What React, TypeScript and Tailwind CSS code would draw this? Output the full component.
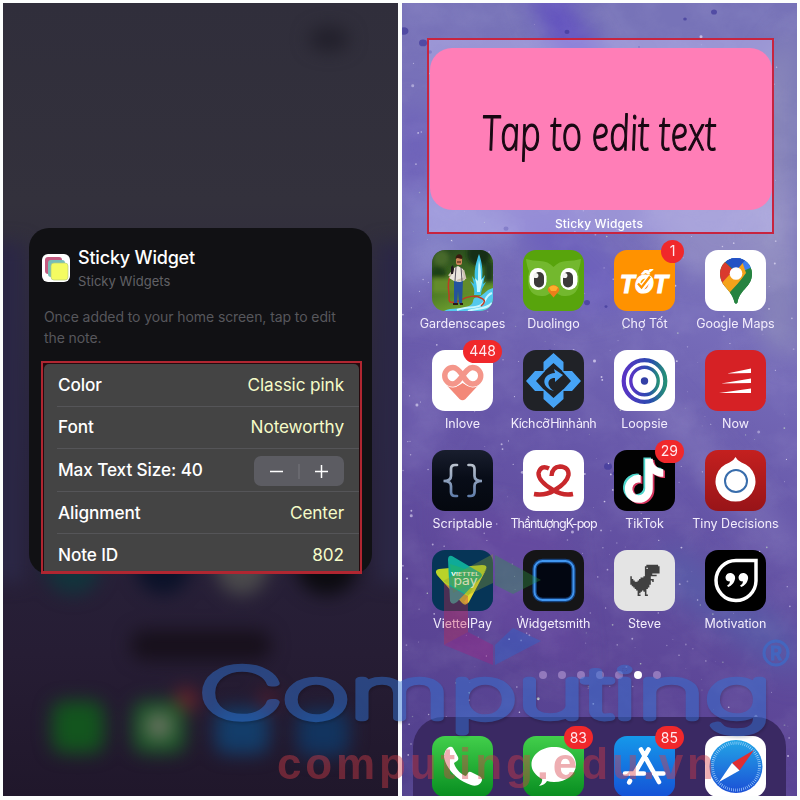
import React from "react";

type App = { name: string; icon: React.ReactNode; badge?: string; tight?: string };

function Tile({ children, bg }: { children?: React.ReactNode; bg: string }) {
  return (
    <svg viewBox="0 0 61 61" className="block h-[61px] w-[61px] overflow-hidden rounded-[13px]">
      <rect width="61" height="61" fill={bg} />
      {children}
    </svg>
  );
}

const Gardenscapes = (
  <Tile bg="url(#garden)">
    <defs>
      <linearGradient id="garden" x1="0" y1="0" x2="0.4" y2="1">
        <stop offset="0" stopColor="#22401c" />
        <stop offset="0.5" stopColor="#3f6b22" />
        <stop offset="1" stopColor="#6fa02e" />
      </linearGradient>
      <filter id="gb"><feGaussianBlur stdDeviation="2.2" /></filter>
    </defs>
    <g filter="url(#gb)">
      <circle cx="9" cy="8" r="8" fill="#47692a" />
      <circle cx="47" cy="4" r="12" fill="#182e17" />
      <circle cx="6" cy="24" r="8" fill="#1f3f17" />
      <rect x="0" y="28" width="45" height="15" fill="#648c2c" />
      <rect x="52" y="12" width="10" height="20" fill="#1a3a1b" />
    </g>
    <path d="M12 61c7-4 18-1 25-5 7-3 1-7 8-9 7-1 8-7 16-9v23z" fill="#54c9ed" />
    <path d="M25 60c10-4 18-1 24-5 6-3 3-9 11-12M36 61c8-3 18-1 24-8" stroke="#c8f6ff" strokeWidth="2" fill="none" />
    <path d="M42 45c1-7-1-9-4-14l4 3-2-8 3 4c-1-8 0-15 4-26 3 8 4 16 3 25l3-4-2 9 3-2c-3 5-5 8-5 13z" fill="#3fc3e8" />
    <path d="M45 42c0-7-1-10-2-14l3 3c0-8 0-15 1-21 2 8 2 14 2 20l2-2-3 14z" fill="#c9fbff" />
    <path d="M18 27c-4 9 0 15-1 22 0 5 6 4 12 1 6-4 15-5 20-2 5 2 4 5 0 8" stroke="#bf3c24" strokeWidth="1.5" fill="none" />
    <path d="M22 30h9l-1 24h-3l-1-13-1 13h-3z" fill="#24539c" />
    <path d="M22 18l4-2 5 3 2 11-5 2-6-1-5-3 3-4z" fill="#ece7df" />
    <path d="M17 26l5-6M31 20l2 8-8 3" stroke="#cfc2b4" strokeWidth="2.4" fill="none" />
    <path d="M24 17l-1 14M29 17l1 14" stroke="#4b4653" strokeWidth="0.9" />
    <rect x="24" y="6" width="6" height="9" rx="2.6" fill="#c98457" />
    <path d="M23.5 9c0-6 7-6 7-1l-1 1-4-1z" fill="#3a1b10" />
    <path d="M25 12h4" stroke="#3a1b10" />
    <path d="M19 17l2-2 1 4-1 5h-2z" fill="#201a1e" />
    <path d="M21 54h5M28 54h3" stroke="#2d1712" strokeWidth="2" />
  </Tile>
);

const Duolingo = (
  <Tile bg="#58a40c">
    <path d="M3 9q7 2 14 2 8 0 13.500 6 5.500-6 13.500-6 7 0 14-2-1 8-3 12 2 10 0 17-4 9-14 8-5 0-10.500-6-5.500 6-10.500 6-10 1-14-8-2-7 0-17-2-4-3-12" fill="#73b82e" />
    <rect x="6.500" y="18" width="17" height="22" rx="8.500" fill="#fff" />
    <rect x="37.500" y="18" width="17" height="22" rx="8.500" fill="#fff" />
    <rect x="11" y="22" width="10" height="15.500" rx="5" fill="#3c3a3a" />
    <rect x="40" y="22" width="10" height="15.500" rx="5" fill="#3c3a3a" />
    <circle cx="12.800" cy="25.500" r="2.600" fill="#f3f3f3" />
    <circle cx="41.800" cy="25.500" r="2.600" fill="#f3f3f3" />
    <path d="M26 37q4.500-4 9 0 2 2 1 4l-5.500 6.500L25 41q-1-2 1-4z" fill="#ec7e1a" />
    <path d="M26 37.500q4.500-4 9 0l-2 3.500h-5z" fill="#ffae2c" />
  </Tile>
);

const ChoTot = (
  <Tile bg="#ff9200">
    <text x="6" y="43" textLength="48" lengthAdjust="spacingAndGlyphs" fill="#fff" stroke="#fff" strokeWidth="1.200" className="font-['Liberation_Sans',sans-serif] text-[25px] font-bold italic">TỐT</text>
    <path d="M23.500 34l4 4 9-11" fill="none" stroke="#fff" strokeWidth="6" />
    <path d="M24 33.500l3.500 4 8.500-11" fill="none" stroke="#ff9200" strokeWidth="2.300" />
  </Tile>
);

const GoogleMaps = (
  <Tile bg="#fff">
    <defs>
      <clipPath id="pin"><path d="M31 8c9 0 16 7 16 15.500 0 14-12 15-14.500 29-.5 1.500-2.500 1.500-3 0C27 39 15 37 15 23.500 15 15 22 8 31 8" /></clipPath>
    </defs>
    <g clipPath="url(#pin)">
      <path d="M14 7h34v47H14z" fill="#268340" />
      <path d="M12 0h40L31 23z" fill="#2452c4" />
      <path d="M25 5h27v10L31 24z" fill="#3d7ef2" />
      <path d="M14 10L20 12l11 11-15 18z" fill="#d93a2e" />
      <path d="M14 36l23-25 4 12-20 27z" fill="#f5a21b" />
      <path d="M50 15L25 42v13h25z" fill="#268340" />
      <path d="M24 7l18 1-11 13-11-9z" fill="#2452c4" />
    </g>
    <circle cx="31" cy="23.500" r="6.300" fill="#fff" />
  </Tile>
);

const Inlove = (
  <Tile bg="#fff">
    <path d="M14.500 35q9 4 16-2 8 6 16 2L33.500 49q-3 2.500-6 0z" fill="#f38878" />
    <path d="M31 26C27 20 24 17.500 21 17.500a8 8 0 0 0 0 16.500C28 34 33 17.500 40.500 17.500a8 8 0 0 1 0 16.500C37 34 34 31 31 26" fill="none" stroke="#fff" strokeWidth="7" />
    <path d="M31 26C27 20 24 17.500 21 17.500a8 8 0 0 0 0 16.500C28 34 33 17.500 40.500 17.500a8 8 0 0 1 0 16.500C37 34 34 31 31 26" fill="none" stroke="#f4968a" strokeWidth="5.400" />
  </Tile>
);

const Resize = (
  <Tile bg="#202227">
    <g fill="#46a3f5">
      <path d="M30.500 3l10 9v10l-10-9-10 9V12z" />
      <path d="M30.500 58l10-9V39l-10 9-10-9v10z" />
      <path d="M3 31l9-10h10l-9 10 9 10H12z" />
      <path d="M58 31l-9-10H39l9 10-9 10h10z" />
      <path d="M31 41c-13-3-13-17 1-18l-1-4 9 6-8 7v-4c-8 0-9 8-1 13" />
    </g>
  </Tile>
);

const Loopsie = (
  <Tile bg="#fff">
    <defs>
      <linearGradient id="loop" x1="0" x2="1"><stop stopColor="#5934c5" /><stop offset=".65" stopColor="#294cae" /><stop offset="1" stopColor="#258f78" /></linearGradient>
    </defs>
    <circle cx="30.500" cy="31" r="20.800" stroke="url(#loop)" strokeWidth="4.200" fill="none" />
    <circle cx="30.500" cy="31" r="13.700" stroke="url(#loop)" strokeWidth="3.400" fill="none" />
    <circle cx="30.500" cy="31" r="3.700" fill="#3340a7" />
  </Tile>
);

const Now = (
  <Tile bg="#d62125">
    <path d="M22 23.500L46 18.500v4.500zM16 33.500L46 28.500v4.500zM14 43l32-4.500V43z" fill="#fff" />
  </Tile>
);

const Scriptable = (
  <Tile bg="url(#scr)">
    <defs>
      <linearGradient id="scr" x2="0" y2="1"><stop stopColor="#191e2e" /><stop offset=".45" stopColor="#080d18" /><stop offset="1" stopColor="#05080f" /></linearGradient>
      <linearGradient id="brace" x2="0" y2="1"><stop stopColor="#b9c1cd" /><stop offset="1" stopColor="#627fab" /></linearGradient>
    </defs>
    <path d="M25 15h-2q-4 0-4 4v7q0 5-7.500 5 7.500 0 7.500 5v6q0 4 4 4h2M36.500 15h2q4 0 4 4v7q0 5 7.500 5-7.500 0-7.500 5v6q0 4-4 4h-2" fill="none" stroke="url(#brace)" strokeWidth="2.700" strokeLinecap="round" />
  </Tile>
);

const Kpop = (
  <Tile bg="#fff">
    <path d="M28.500 26Q29 17 37 16.500 46 17 45.500 25 44 33 31 40.500 22 46 11 44M26 18.500Q18 14.500 15.500 23 15 31 30 40 40 46 50 44" fill="none" stroke="#c8282c" strokeWidth="4.400" />
  </Tile>
);

const note = "M448,209.91a210.06,210.06,0,0,1-122.77-39.25V349.38A162.55,162.55,0,1,1,185,188.31V278.2a74.62,74.62,0,1,0,52.23,71.18V0l88,0a121.18,121.18,0,0,0,1.86,22.17h0A122.18,122.18,0,0,0,381,102.39a121.43,121.43,0,0,0,67,20.14Z";
const TikTok = (
  <Tile bg="#020202">
    <path d={note} fill="#4ed6cc" transform="translate(9 7.500) scale(.086)" />
    <path d={note} fill="#d5345e" transform="translate(12.500 10) scale(.086)" />
    <path d={note} fill="#fff" transform="translate(10.800 8.800) scale(.086)" />
  </Tile>
);

const Tiny = (
  <Tile bg="url(#tiny)">
    <defs><linearGradient id="tiny" x2="0" y2="1"><stop stopColor="#c4201f" /><stop offset="1" stopColor="#981418" /></linearGradient></defs>
    <path d="M30.500 7q2 4 6 5.500a20 20 0 1 1-12 0q4-1.500 6-5.500" fill="#fff" />
    <circle cx="31" cy="31" r="11" fill="none" stroke="#386dac" strokeWidth="2" />
  </Tile>
);

const Viettel = (
  <Tile bg="#063557">
    <path d="M7 19q-5 1-2 6l25 28q4 4 6-1l18-33q2-4-4-4z" fill="#bad329" />
    <path d="M55 18L37 52q-2 3-5 0l13-19z" fill="#e7d92f" />
    <path d="M20 6q-4-1-4 4l2 41q2 5 7 1l24-25q2-3-2-5z" fill="#0faa98" />
    <path d="M18 14l31 10q2 2-2 5L21 43z" fill="#1cae79" />
    <text x="19" y="25.500" textLength="28" lengthAdjust="spacingAndGlyphs" fill="#fff" className="font-['Inter',sans-serif] text-[4.500px] font-bold">VIETTEL</text>
    <text x="21.500" y="34.500" textLength="24" lengthAdjust="spacingAndGlyphs" fill="#fff" className="font-['Inter',sans-serif] text-[12px]">pay</text>
  </Tile>
);

const Widgetsmith = (
  <Tile bg="#151517">
    <rect x="11.500" y="11" width="39" height="39" rx="8" fill="#020611" stroke="#15427d" strokeWidth="4.400" />
    <rect x="11.500" y="11" width="39" height="39" rx="8" fill="none" stroke="#4196f0" strokeWidth="1.900" />
  </Tile>
);

const dinoRows = [
  "...........########.",
  "..........##########",
  "..........#.########",
  "..........##########",
  "..........##########",
  "..........##########",
  "..........#####.....",
  "..........########..",
  "#........#####......",
  "#......#######......",
  "##....##########....",
  "###..#########.#....",
  "##############......",
  "##############......",
  ".############.......",
  "..###########.......",
  "...#########........",
  "....#######.........",
  ".....###.##.........",
  ".....##...#.........",
  ".....#....#.........",
  ".....##...##........",
];
const dinoPath = dinoRows
  .flatMap((row, y) => [...row].map((c, x) => (c === "#" ? `M${x} ${y}h1.05v1.05h-1.05z` : "")))
  .join("");
const Steve = (
  <Tile bg="#e4e4e4">
    <path d={dinoPath} fill="#404040" transform="translate(16.300 14.800) scale(1.460 1.420)" />
  </Tile>
);

const Motivation = (
  <Tile bg="#000">
    <path d="M51 10.500V31A20 20 0 1 1 31 10.500z" fill="none" stroke="#fff" strokeWidth="3.500" />
    <path d="M20.500 27a4.800 4.800 0 1 1 9.600 1.500c-.6 4.500-4 7.500-7 8.500l-1-1.500q3-2 3-4-4.600 0-4.600-4.500M33.500 27a4.800 4.800 0 1 1 9.600 1.500c-.6 4.500-4 7.500-7 8.500l-1-1.500q3-2 3-4-4.600 0-4.600-4.500" fill="#fff" />
  </Tile>
);

const Phone = (
  <Tile bg="url(#call)">
    <defs><linearGradient id="call" x2="0" y2="1"><stop stopColor="#42cf4b" /><stop offset="1" stopColor="#078d20" /></linearGradient></defs>
    <path d="M17 11q-5 3-5 10c2 12 14 24 27 28 6 2 10-1 11-5 0-2-1-3-3-4l-8-4q-2-1-3 1l-2 3c-5-1-11-8-12-13l3-2q2-1 1-4l-5-9q-1-2-4-1" fill="#fff" />
  </Tile>
);
const Messages = (
  <Tile bg="url(#call)">
    <path d="M31 11c13 0 22 8 22 17.500S44 46 31 46q-4 0-7-1-2 4-8 5 4-4 3-7C12 39 8.500 34 8.500 28.500 8.500 19 18 11 31 11" fill="#fff" />
  </Tile>
);
const AppStore = (
  <Tile bg="url(#store)">
    <defs><linearGradient id="store" x2="0" y2="1"><stop stopColor="#1598ea" /><stop offset="1" stopColor="#1452d6" /></linearGradient></defs>
    <path d="M34.500 13.500L20.500 37.500M27 13.500l18 32.500M11 37.500h19M40 37.500h9.500M16 45l-.8 1.400" stroke="#fff" strokeWidth="4.600" strokeLinecap="round" />
  </Tile>
);
const Safari = (
  <Tile bg="#fff">
    <defs><linearGradient id="saf" x2="0" y2="1"><stop stopColor="#23a5e6" /><stop offset="1" stopColor="#1b50d6" /></linearGradient></defs>
    <circle cx="31" cy="30.500" r="26.500" fill="url(#saf)" />
    <circle cx="31" cy="30.500" r="23.500" fill="none" stroke="#b5dcff" strokeWidth="3" strokeDasharray="0.600 1.450" />
    <path d="M49 14L34.500 34.500 27 27z" fill="#df2e32" />
    <path d="M14 46L27 27l7.500 7.500z" fill="#fff" />
  </Tile>
);

const apps: App[] = [
  { name: "Gardenscapes", icon: Gardenscapes },
  { name: "Duolingo", icon: Duolingo },
  { name: "Chợ Tốt", icon: ChoTot, badge: "1" },
  { name: "Google Maps", icon: GoogleMaps },
  { name: "Inlove", icon: Inlove, badge: "448" },
  { name: "Kích cỡ Hình ảnh", icon: Resize, tight: "tracking-[-0.55px] [word-spacing:-2px]" },
  { name: "Loopsie", icon: Loopsie },
  { name: "Now", icon: Now },
  { name: "Scriptable", icon: Scriptable },
  { name: "Thần tượng K-pop", icon: Kpop, tight: "tracking-[-0.95px] [word-spacing:-2.5px]" },
  { name: "TikTok", icon: TikTok, badge: "29" },
  { name: "Tiny Decisions", icon: Tiny },
  { name: "ViettelPay", icon: Viettel },
  { name: "Widgetsmith", icon: Widgetsmith },
  { name: "Steve", icon: Steve },
  { name: "Motivation", icon: Motivation },
];
const dock: App[] = [
  { name: "Phone", icon: Phone },
  { name: "Messages", icon: Messages, badge: "83" },
  { name: "App Store", icon: AppStore, badge: "85" },
  { name: "Safari", icon: Safari },
];

function Badge({ text }: { text: string }) {
  return (
    <span className="absolute -top-[10px] -right-[9px] flex h-[23px] min-w-[23px] items-center justify-center rounded-full bg-[#f0282b] px-[6px] text-[14px] leading-none text-[#ffe9ee]">
      {text}
    </span>
  );
}

function Wallpaper() {
  let seed = 41;
  const rnd = () => (seed = (seed * 16807) % 2147483647) / 2147483647;
  const specks = Array.from({ length: 420 }, () => {
    const big = rnd();
    return { x: rnd() * 395, y: Math.pow(rnd(), 0.7) * 794, r: big > 0.94 ? 1.5 : 0.35 + big * 0.7, o: 0.3 + rnd() * 0.5 };
  });
  const dark = [[2, 28, 4.5], [21, 40, 4], [28, 49, 2], [165, 29, 2.5], [283, 16, 1.8], [312, 9, 3], [104, 226, 2.5], [185, 300, 3], [204, 304, 1.5], [206, 464, 4], [213, 471, 2.5], [148, 348, 1.5], [237, 44, 1]];
  return (
    <svg viewBox="0 0 395 794" preserveAspectRatio="none" className="absolute inset-0 h-full w-full">
      <defs>
        <linearGradient id="wall" x1="0.2" y1="0" x2="0" y2="1">
          <stop offset="0" stopColor="#7773b8" />
          <stop offset=".28" stopColor="#776dba" />
          <stop offset=".5" stopColor="#6656a8" />
          <stop offset=".75" stopColor="#5c4596" />
          <stop offset="1" stopColor="#50408c" />
        </linearGradient>
        <filter id="soft" x="-30%" y="-30%" width="160%" height="160%" colorInterpolationFilters="sRGB"><feGaussianBlur stdDeviation="13" /></filter>
        <filter id="grain" x="0" y="0" width="100%" height="100%">
          <feTurbulence type="fractalNoise" baseFrequency="0.025 0.03" numOctaves="5" seed="5" />
          <feColorMatrix values="0 0 0 0 0.8 0 0 0 0 0.78 0 0 0 0 0.96 0.9 0 0 0 -0.34" />
        </filter>
      </defs>
      <rect width="395" height="794" fill="url(#wall)" />
      <g filter="url(#soft)">
        <path d="M125 -10l35 0 50 80-40 10z" fill="#6150c0" />
        <path d="M395 20L340 90l20 250 35 20z" fill="#8e8cba" opacity=".75" />
        <path d="M0 100l30 20-10 110H0z" fill="#6a5cba" opacity=".8" />
        <path d="M0 190l60-5 60 45-120 60z" fill="#8583c8" opacity=".8" />
        <path d="M100 200l60 5 90 90-80 20z" fill="#6a5cbc" opacity=".7" />
        <path d="M230 195l165-20v90l-100 10z" fill="#9a96c8" opacity=".7" />
        <path d="M0 360l60 20-40 90-20 10z" fill="#7667b5" opacity=".6" />
        <path d="M250 380L395 540v30L235 400z" fill="#8b80c2" opacity=".6" />
        <path d="M40 500l120 20 20 150-120-60z" fill="#684aa0" opacity=".6" />
        <path d="M270 540l125 90v50L250 580z" fill="#5563ac" opacity=".6" />
      </g>
      <rect width="395" height="794" filter="url(#grain)" opacity=".17" />
      {dark.map(([x, y, r], i) => <ellipse key={i} cx={x} cy={y} rx={r} ry={r * 0.85} fill="#40399a" opacity=".7" />)}
      {specks.map((s, i) => <circle key={i} cx={s.x} cy={s.y} r={s.r} fill={i % 6 === 0 ? "#c5ddc5" : "#e4def6"} opacity={s.o} />)}
    </svg>
  );
}

function DimBackdrop() {
  return (
    <svg viewBox="0 0 395 794" preserveAspectRatio="none" className="absolute inset-0 h-full w-full">
      <defs>
        <linearGradient id="dim" x2="0" y2="1">
          <stop stopColor="#302e3b" />
          <stop offset=".25" stopColor="#33313c" />
          <stop offset=".55" stopColor="#29243d" />
          <stop offset=".82" stopColor="#261d34" />
          <stop offset="1" stopColor="#20172b" />
        </linearGradient>
        <filter id="haze" filterUnits="userSpaceOnUse" x="-60" y="-60" width="520" height="920" colorInterpolationFilters="sRGB"><feGaussianBlur stdDeviation="9" /></filter>
      </defs>
      <rect width="395" height="794" fill="url(#dim)" />
      <g filter="url(#haze)">
        <path d="M-20 240h42v340h-42zM374 240h41v340h-41z" fill="#2b2745" />
        <ellipse cx="326" cy="36" rx="20" ry="12" fill="#211f2a" />
        <ellipse cx="70" cy="565" rx="27" ry="27" fill="#12343c" />
        <ellipse cx="160" cy="565" rx="27" ry="27" fill="#0b1229" />
        <ellipse cx="239" cy="565" rx="26" ry="28" fill="#4b4a4c" />
        <ellipse cx="324" cy="565" rx="30" ry="28" fill="#0c0b10" />
        <rect x="128" y="628" width="140" height="30" rx="13" fill="#17101b" />
        <circle cx="183" cy="698" r="12" fill="#6b212a" />
        <circle cx="265" cy="697" r="10" fill="#4d1c2c" />
        <rect x="49" y="699" width="52" height="52" rx="12" fill="#13551e" />
        <rect x="130" y="699" width="52" height="52" rx="12" fill="#1c5a28" />
        <circle cx="156" cy="724" r="14" fill="#67705f" />
        <rect x="212" y="706" width="54" height="46" rx="12" fill="#133d6a" />
        <rect x="294" y="708" width="52" height="46" rx="12" fill="#12345f" />
      </g>
    </svg>
  );
}

const rows = [
  ["Color", "Classic pink"],
  ["Font", "Noteworthy"],
  ["Max Text Size: 40", ""],
  ["Alignment", "Center"],
  ["Note ID", "802"],
];

function SettingsCard() {
  return (
    <section className="relative ml-[26px] mt-[225px] h-[346px] w-[343px] rounded-[20px] bg-[#111114] pt-[17px]">
      <header className="flex h-[46px] items-center pl-[13px]">
        <svg viewBox="0 0 28 28" className="h-[28px] w-[28px]">
          <rect width="28" height="28" rx="6" fill="#fff" />
          <rect x="3" y="3" width="17" height="17" rx="3" fill="#c35a80" />
          <rect x="6" y="6" width="17" height="17" rx="3" fill="#77bdb7" />
          <rect x="9" y="9" width="17" height="17" rx="3" fill="#f4fb61" stroke="#b8cf78" strokeWidth=".7" />
        </svg>
        <div className="ml-[8px] pt-[1px]">
          <h1 className="text-[18px] font-medium leading-[25px] tracking-[-0.2px] text-white">Sticky Widget</h1>
          <p className="text-[13px] leading-[23px] tracking-[0.05px] text-[#616166]">Sticky Widgets</p>
        </div>
      </header>
      <p className="ml-[15px] mt-[15px] w-[310px] text-[14px] leading-[21px] tracking-[-0.09px] text-[#57575c]">
        Once added to your home screen, tap to edit<br />the note.
      </p>
      <div className="ml-[12px] mt-[13px] h-[213px] w-[321px] border-2 border-b-[3px] border-[#b02631] bg-[#260a0e] px-[1px] pt-[1px]">
        <ul className="h-[207px] overflow-hidden rounded-t-[5px] bg-[#444444] pl-[13px]">
          {rows.map(([label, value], i) => (
            <li key={label} className={`flex items-center justify-between pr-[15px] text-[17.2px] text-white ${i ? "h-[42.6px] border-t border-[#555558]" : "h-[41.6px]"}`}>
              <span className="pl-[1px] font-medium tracking-[-0.1px]">{label}</span>
              {value ? <span className="tracking-[-0.1px] text-[#f5fbc8]">{value}</span> : (
                <span className="mt-[2px] flex h-[30px] w-[90px] items-center rounded-[7px] bg-[#5c5c62]">
                  <svg viewBox="0 0 90 30" className="h-full w-full"><path d="M16 15.500h13M61 15.500h13M67.500 9v13" stroke="#fff" strokeWidth="1.500" /><path d="M45 8v15" stroke="#77777c" /></svg>
                </span>
              )}
            </li>
          ))}
        </ul>
      </div>
    </section>
  );
}

function AppCell({ app, label }: { app: App; label?: boolean }) {
  return (
    <div className="flex w-[91px] shrink-0 flex-col items-center">
      <div className="relative">
        {app.icon}
        {app.badge && <Badge text={app.badge} />}
      </div>
      {label && <span className={`mt-[4px] whitespace-nowrap text-[12.5px] leading-[18px] text-[#f3edfc] ${app.tight ?? ""}`}>{app.name}</span>}
    </div>
  );
}

function Watermark() {
  return (
    <svg viewBox="0 0 800 800" className="pointer-events-none absolute inset-0 h-[800px] w-[800px]">
      <g opacity=".36">
        <path d="M495 555l46 25-28 14-18-9z" fill="#2d9a48" />
        <path d="M493 554l-50 27 25 14 25-12z" fill="#8c9c32" />
        <path d="M444 583l24 13v37l-24 12z" fill="#c8264f" />
        <path d="M444 645l24-13 25 13v20z" fill="#a71e80" />
        <path d="M495 645l18-17 28 13-46 24z" fill="#236bd4" />
      </g>
      <g opacity=".48" className="drop-shadow-[1px_2px_1px_rgba(0,0,0,0.3)]">
        <g transform="translate(199 718) scale(1.5 1)">
          <text x="0" y="0" textLength="382" lengthAdjust="spacingAndGlyphs" fill="#3274d5" stroke="#3274d5" strokeWidth="8" strokeLinejoin="round" vectorEffect="non-scaling-stroke" className="font-['Inter',sans-serif] text-[69px] font-thin">Computing</text>
        </g>
      </g>
      <g opacity=".55">
        <circle cx="776" cy="653" r="12" fill="none" stroke="#3274d5" strokeWidth="3" />
        <text x="776" y="660" textAnchor="middle" fill="#3274d5" stroke="#3274d5" className="font-['Inter',sans-serif] text-[18px] font-semibold">R</text>
      </g>
      <text x="277" y="779" textLength="437" fill="#d63e48" opacity=".42" className="font-['Liberation_Sans',Arial,sans-serif] text-[44px] font-bold">computing.edu.vn</text>
    </svg>
  );
}

export default function App() {
  return (
    <main className="relative flex h-[800px] w-[800px] gap-[4px] overflow-hidden bg-[#fcfefd] p-[3px] font-['Inter',sans-serif]">
      <div className="relative h-[793px] w-[395px] overflow-hidden bg-[#29243a]">
        <DimBackdrop />
        <SettingsCard />
      </div>
      <div className="relative flex h-[793px] w-[395px] flex-col overflow-hidden bg-[#6657a8]">
        <Wallpaper />
        <section className="relative ml-[25px] mt-[35px] flex h-[196px] w-[347px] flex-col items-center border-2 border-[#c7243f] bg-[#cfcaff]/40 pt-[8px]">
          <div className="flex h-[162px] w-[342px] items-center justify-center rounded-[22px] bg-[#ff7eb7]">
            <svg viewBox="0 0 342 162" className="h-full w-full">
              <g transform="translate(54 102) skewX(7)">
                <text x="0" y="0" textLength="234" lengthAdjust="spacingAndGlyphs" fill="#170812" stroke="#170812" strokeWidth="1.300" strokeLinejoin="round" className="font-['Noteworthy','Open_Sans',sans-serif] text-[48px] font-light italic">Tap to edit text</text>
              </g>
            </svg>
          </div>
          <span className="mr-[3px] mt-[5px] text-[12px] font-medium leading-[18px] tracking-[0.15px] text-white">Sticky Widgets</span>
        </section>
        <section className="relative ml-[15px] mt-[15.500px] grid w-[364px] grid-cols-4 gap-y-[17.200px]">
          {apps.map((app) => <AppCell key={app.name} app={app} label />)}
        </section>
        <nav className="relative mt-[37.500px] flex justify-center gap-[11px]">
          {[0, 1, 2, 3, 4, 5, 6].map((n) => <span key={n} className={`h-[8px] w-[8px] rounded-full ${n === 5 ? "bg-white" : "bg-[#b59bd5]/60"}`} />)}
        </nav>
        <footer className="relative mx-[11px] mt-[38.500px] flex h-[100px] shrink-0 rounded-t-[30px] bg-[#3a2963] pl-[4px] pt-[19px]">
          {dock.map((app) => <AppCell key={app.name} app={app} />)}
        </footer>
      </div>
      <Watermark />
    </main>
  );
}
